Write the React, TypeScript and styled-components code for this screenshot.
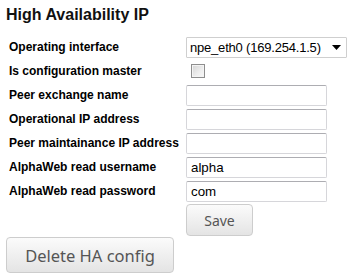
import React from "react";
import styled, { createGlobalStyle } from "styled-components";

const GlobalStyle = createGlobalStyle`
  html, body { margin: 0; padding: 0; background: #ffffff; }
  body { font-family: "Liberation Sans", Arial, sans-serif; }
`;

const Page = styled.div`
  padding: 5px 0 0 6px;
  width: 350px;
`;

const Title = styled.h2`
  margin: 0;
  font: bold 16px/19px "Liberation Sans", Arial, sans-serif;
  color: #111;
`;

const Form = styled.div`
  margin-top: 11px;
  padding-left: 3px;
  display: grid;
  grid-template-columns: 177px auto;
  grid-template-rows: repeat(7, 24px) auto;
  align-items: center;
  justify-items: start;
`;

const Label = styled.label`
  font: bold 12px/24px "Liberation Sans", Arial, sans-serif;
  color: #000;
  white-space: nowrap;
`;

const SelectWrap = styled.div`
  position: relative;
  width: 161px;
  height: 21px;
`;

const Select = styled.select`
  appearance: none;
  -webkit-appearance: none;
  box-sizing: border-box;
  width: 100%;
  height: 100%;
  margin: 0;
  padding: 0 0 0 3px;
  border: 1px solid #cfcfcf;
  border-radius: 1px;
  background: #fff;
  color: #000;
  font: 13px "Liberation Sans", Arial, sans-serif;
  letter-spacing: -0.2px;
  outline: none;
`;

const Arrow = styled.svg`
  position: absolute;
  right: 6px;
  top: 8px;
  width: 9px;
  height: 5px;
  pointer-events: none;
`;

const Check = styled.input.attrs({ type: "checkbox" })`
  appearance: none;
  -webkit-appearance: none;
  box-sizing: border-box;
  margin: 0 0 0 5px;
  width: 14px;
  height: 14px;
  border: 1px solid #8e8e8e;
  border-radius: 0;
  background: linear-gradient(135deg, #d4d4d4 0%, #eeeeee 60%, #f8f8f8 100%);
  box-shadow: inset 0 0 0 1px #f4f4f4;
`;

const Input = styled.input`
  box-sizing: border-box;
  width: 141px;
  height: 21px;
  margin: 0;
  padding: 0 4px;
  border: 1px solid #d6d6da;
  border-top-color: #adadb2;
  border-radius: 2px;
  background: #fff;
  color: #000;
  font: 13.33px "Liberation Sans", Arial, sans-serif;
  outline: none;
`;

const Button = styled.button<{ $big?: boolean }>`
  box-sizing: border-box;
  margin: 0;
  padding: 0;
  width: ${(p) => (p.$big ? "168px" : "67px")};
  height: ${(p) => (p.$big ? "36px" : "32px")};
  border: 1px solid #cdcdcd;
  border-radius: 4px;
  background: linear-gradient(#fbfbfb, #e4e4e4);
  color: #555;
  font: ${(p) => (p.$big ? "16.5px" : "14px")} "Noto Sans", "Open Sans", sans-serif;
  cursor: pointer;
`;

const SaveCell = styled.div`
  grid-column: 2;
  margin-top: 1px;
`;

const DeleteRow = styled.div`
  margin-top: 1px;
`;

const fields: { label: string; value: string }[] = [
  { label: "Peer exchange name", value: "" },
  { label: "Operational IP address", value: "" },
  { label: "Peer maintainance IP address", value: "" },
  { label: "AlphaWeb read username", value: "alpha" },
  { label: "AlphaWeb read password", value: "com" },
];

export default function App() {
  return (
    <>
      <GlobalStyle />
      <Page>
        <Title>High Availability IP</Title>
        <Form>
          <Label>Operating interface</Label>
          <SelectWrap>
            <Select defaultValue="npe_eth0">
              <option value="npe_eth0">npe_eth0 (169.254.1.5)</option>
            </Select>
            <Arrow viewBox="0 0 9 5">
              <path d="M0 0 H9 L4.5 5 Z" fill="#000" />
            </Arrow>
          </SelectWrap>
          <Label>Is configuration master</Label>
          <Check />
          {fields.map((f) => (
            <React.Fragment key={f.label}>
              <Label>{f.label}</Label>
              <Input type="text" defaultValue={f.value} />
            </React.Fragment>
          ))}
          <SaveCell>
            <Button>Save</Button>
          </SaveCell>
        </Form>
        <DeleteRow>
          <Button $big>Delete HA config</Button>
        </DeleteRow>
      </Page>
    </>
  );
}
